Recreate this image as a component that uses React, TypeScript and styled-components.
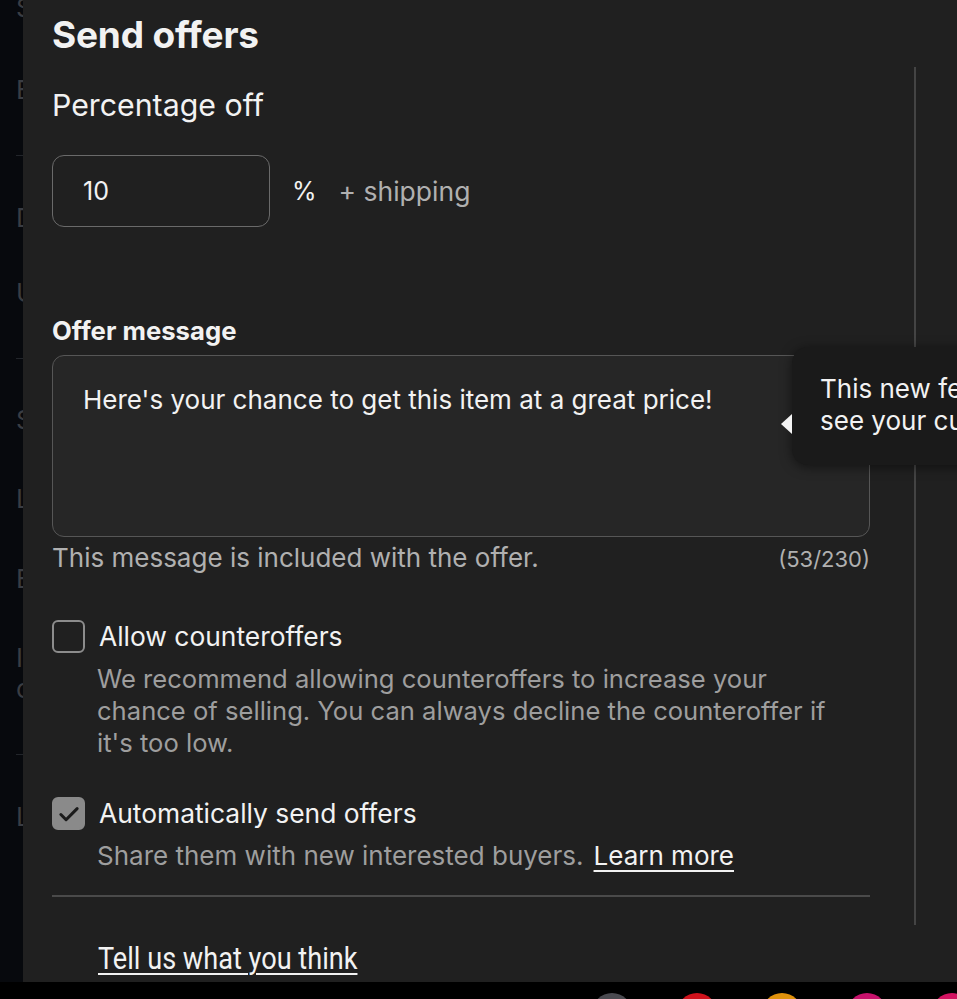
import React from "react";
import styled, { createGlobalStyle } from "styled-components";

const Global = createGlobalStyle`
  html, body { margin: 0; padding: 0; background: #000; }
  body { font-family: Inter, "Liberation Sans", sans-serif; -webkit-font-smoothing: antialiased; }
  * { box-sizing: border-box; }
`;

const Page = styled.div`
  width: 957px;
  height: 999px;
  display: flex;
  flex-direction: column;
  overflow: hidden;
  background: #000;
`;

const Main = styled.div`
  height: 982px;
  display: flex;
`;

const BackNav = styled.div`
  width: 23px;
  flex: none;
  background: #07090d;
  overflow: hidden;
  display: flex;
  flex-direction: column;
  padding-left: 16px;
`;

const NavLetter = styled.div<{ $top: number }>`
  margin-top: ${(p) => p.$top}px;
  height: 30px;
  font-size: 26px;
  line-height: 30px;
  color: #3a3d43;
  white-space: nowrap;
`;

const NavRule = styled.div<{ $top: number }>`
  margin-top: ${(p) => p.$top}px;
  height: 1px;
  background: #22252a;
  flex: none;
`;

const Panel = styled.div`
  flex: 1;
  position: relative;
  background: #202020;
  display: flex;
  overflow: hidden;
`;

const Content = styled.div`
  width: 818px;
  margin-left: 29px;
  display: flex;
  flex-direction: column;
  color: #f2f2f2;
`;

const Title = styled.h1`
  margin: 13px 0 0;
  font-size: 37px;
  line-height: 44px;
  font-weight: 700;
  letter-spacing: -0.2px;
`;

const SectionTitle = styled.h2`
  margin: 30px 0 0;
  font-size: 30.3px;
  line-height: 36px;
  font-weight: 400;
`;

const PercentRow = styled.div`
  margin-top: 32px;
  display: flex;
  align-items: center;
  gap: 22px;
`;

const NumberBox = styled.div`
  width: 218px;
  height: 72px;
  border: 1.5px solid #6a6a6a;
  border-radius: 12px;
  display: flex;
  align-items: center;
  padding-left: 30px;
  font-size: 25px;
  color: #f2f2f2;
`;

const Percent = styled.span`
  font-size: 25px;
  color: #f2f2f2;
`;

const Muted = styled.span`
  font-size: 26.5px;
  color: #b0b0b0;
`;

const Label = styled.div`
  margin-top: 89px;
  font-size: 25.7px;
  line-height: 30px;
  font-weight: 700;
`;

const TextArea = styled.div`
  margin-top: 9px;
  height: 182px;
  border: 1.5px solid #565656;
  border-radius: 12px;
  background: #262626;
  padding: 28px 30px;
  font-size: 26px;
  line-height: 32px;
  color: #f2f2f2;
`;

const HelpRow = styled.div`
  margin-top: 5px;
  display: flex;
  justify-content: space-between;
  align-items: baseline;
  font-size: 26px;
  line-height: 32px;
  color: #b0b0b0;
`;

const Counter = styled.span`
  font-size: 22px;
`;

const Option = styled.div<{ $top: number }>`
  margin-top: ${(p) => p.$top}px;
  display: grid;
  grid-template-columns: 33px 1fr;
  column-gap: 14px;
  row-gap: 10px;
`;

const Box = styled.div<{ $checked?: boolean }>`
  width: 33px;
  height: 33px;
  border-radius: 6px;
  border: 2px solid ${(p) => (p.$checked ? "#8a8a8a" : "#8c8c8c")};
  background: ${(p) => (p.$checked ? "#8a8a8a" : "transparent")};
  display: flex;
  align-items: center;
  justify-content: center;
  margin-top: 1px;
`;

const OptLabel = styled.div`
  font-size: 26.4px;
  line-height: 34px;
  color: #f2f2f2;
`;

const OptDesc = styled.div`
  grid-column: 2;
  margin-left: -2px;
  max-width: 750px;
  font-size: 25.6px;
  line-height: 32px;
  color: #9e9e9e;
`;

const ShareText = styled.span`
  font-size: 26px;
`;

const TextLink = styled.a`
  color: #f2f2f2;
  font-size: 26px;
  text-decoration: underline;
  text-underline-offset: 5px;
  text-decoration-thickness: 2px;
  margin-left: 10px;
`;

const Divider = styled.div`
  margin-top: 23px;
  height: 2px;
  background: #4a4a4a;
`;

const Feedback = styled.a`
  margin-top: 44px;
  margin-left: 46px;
  align-self: flex-start;
  font-family: "Roboto", sans-serif;
  font-size: 31px;
  line-height: 36px;
  color: #f2f2f2;
  text-decoration: underline;
  text-underline-offset: 4px;
  text-decoration-thickness: 2px;
  transform: scaleX(0.875);
  transform-origin: left center;
`;

const VRule = styled.div`
  margin-left: 44px;
  margin-top: 67px;
  width: 2px;
  height: 858px;
  background: #444;
  flex: none;
`;

const Tooltip = styled.div`
  position: absolute;
  left: 769px;
  top: 347px;
  width: 320px;
  height: 118px;
  background: #1a1a1a;
  border-radius: 16px;
  box-shadow: 0 2px 12px rgba(0, 0, 0, 0.5);
  padding: 26px 0 0 28px;
  font-size: 26px;
  line-height: 32px;
  color: #f2f2f2;
  white-space: nowrap;
`;

const Arrow = styled.div`
  position: absolute;
  left: -11px;
  top: 67px;
  width: 0;
  height: 0;
  border-top: 10px solid transparent;
  border-bottom: 10px solid transparent;
  border-right: 11px solid #f4f4f4;
`;

const Dock = styled.div`
  height: 17px;
  display: flex;
  gap: 45px;
  padding-left: 592px;
  overflow: hidden;
`;

const DockIcon = styled.div<{ $color: string }>`
  flex: none;
  width: 40px;
  height: 40px;
  margin-top: 11px;
  border-radius: 50%;
  background: ${(p) => p.$color};
`;

const Check = () => (
  <svg width="26" height="26" viewBox="0 0 24 24" fill="none">
    <path d="M4.5 12.5l4.8 4.8L19.5 7" stroke="#1a1a1a" strokeWidth="2.8" strokeLinecap="round" strokeLinejoin="round" />
  </svg>
);

export default function App() {
  return (
    <Page>
      <Global />
      <Main>
        <BackNav>
          <NavLetter $top={-7}>S</NavLetter>
          <NavLetter $top={52}>E</NavLetter>
          <NavRule $top={50} />
          <NavLetter $top={47}>D</NavLetter>
          <NavLetter $top={45}>U</NavLetter>
          <NavRule $top={50} />
          <NavLetter $top={46}>S</NavLetter>
          <NavLetter $top={49}>L</NavLetter>
          <NavLetter $top={50}>E</NavLetter>
          <NavLetter $top={49}>I</NavLetter>
          <NavLetter $top={1}>c</NavLetter>
          <NavRule $top={50} />
          <NavLetter $top={47}>L</NavLetter>
        </BackNav>
        <Panel>
          <Content>
            <Title>Send offers</Title>
            <SectionTitle>Percentage off</SectionTitle>
            <PercentRow>
              <NumberBox>10</NumberBox>
              <Percent>%</Percent>
              <Muted>+ shipping</Muted>
            </PercentRow>
            <Label>Offer message</Label>
            <TextArea>Here's your chance to get this item at a great price!</TextArea>
            <HelpRow>
              <span>This message is included with the offer.</span>
              <Counter>(53/230)</Counter>
            </HelpRow>
            <Option $top={44}>
              <Box />
              <OptLabel>Allow counteroffers</OptLabel>
              <OptDesc>
                We recommend allowing counteroffers to increase your chance of selling. You can always decline the
                counteroffer if it's too low.
              </OptDesc>
            </Option>
            <Option $top={37}>
              <Box $checked>
                <Check />
              </Box>
              <OptLabel>Automatically send offers</OptLabel>
              <OptDesc>
                <ShareText>Share them with new interested buyers.</ShareText>
                <TextLink href="#">Learn more</TextLink>
              </OptDesc>
            </Option>
            <Divider />
            <Feedback href="#">Tell us what you think</Feedback>
          </Content>
          <VRule />
          <Tooltip>
            <Arrow />
            This new feature lets you
            <br />
            see your custom offers
          </Tooltip>
        </Panel>
      </Main>
      <Dock>
        <DockIcon $color="#4a4a50" />
        <DockIcon $color="#d0121c" />
        <DockIcon $color="#e0920c" />
        <DockIcon $color="#c8126c" />
        <DockIcon $color="#d41462" />
      </Dock>
    </Page>
  );
}
